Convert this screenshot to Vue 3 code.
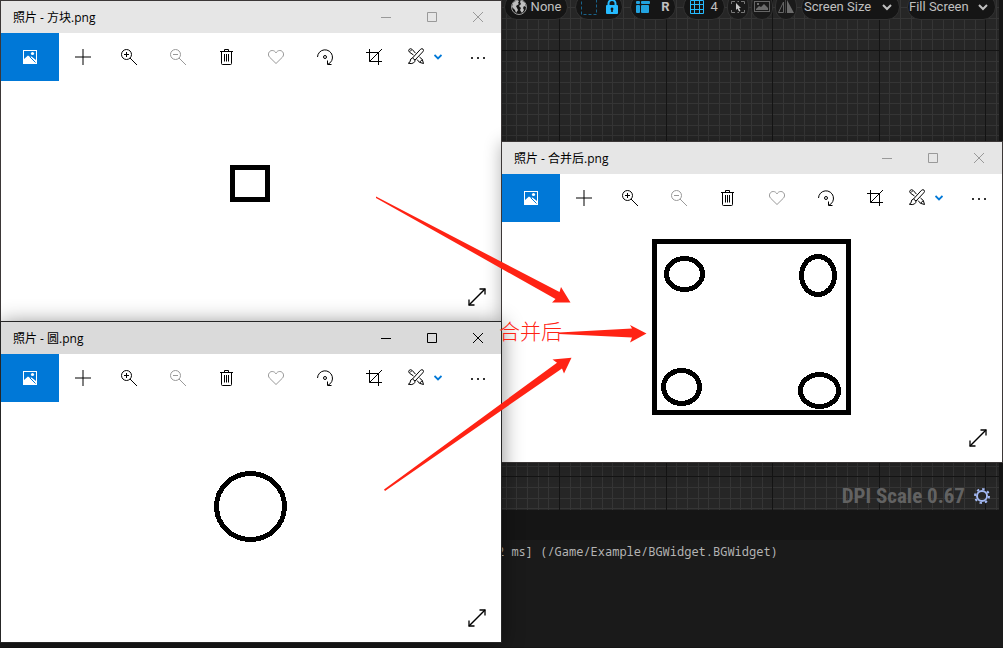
<script setup>
const majors = 106.6
const steps = 10.66

function gridPath(originX, originY, step, width, height) {
  const parts = []
  for (let k = -Math.floor(originX / step); originX + k * step < width; k++) {
    parts.push(`M${Math.round(originX + k * step)}.5 0V${height}`)
  }
  for (let k = -Math.floor(originY / step); originY + k * step < height; k++) {
    parts.push(`M0 ${Math.round(originY + k * step)}.5H${width}`)
  }
  return parts.join('')
}

const minorGrid = gridPath(559, 50, steps, 3000, 510)
const majorGrid = gridPath(559, 50, majors, 3000, 510)

const windows = [
  {
    id: 'square',
    title: '照片 - 方块.png',
    active: false,
    rects: [{ x: 231.5, y: 86.5, width: 35, height: 32 }],
    ellipses: [],
  },
  {
    id: 'merged',
    title: '照片 - 合并后.png',
    active: false,
    rects: [{ x: 152.5, y: 19.5, width: 194, height: 171 }],
    ellipses: [
      { cx: 182.5, cy: 52, rx: 18, ry: 15.5 },
      { cx: 316, cy: 53.5, rx: 16.5, ry: 19 },
      { cx: 179.5, cy: 165, rx: 18, ry: 16.5 },
      { cx: 317.5, cy: 168.5, rx: 19, ry: 16 },
    ],
  },
  {
    id: 'circle',
    title: '照片 - 圆.png',
    active: true,
    rects: [],
    ellipses: [{ cx: 249.5, cy: 104.5, rx: 34, ry: 33 }],
  },
]
</script>

<template>
  <main class="desktop">
    <section class="viewport">
      <svg class="grid" aria-hidden="true">
        <path :d="minorGrid" stroke="#353535" fill="none" />
        <path :d="majorGrid" stroke="#141414" fill="none" />
      </svg>
      <div class="editor-bar">
        <button class="pill none" type="button">
          <svg width="16" height="16" viewBox="0 0 16 16">
            <circle cx="8" cy="8" r="7.5" fill="none" stroke="#9a9a9a" />
            <path d="M2 4L6 1L8 2L7 4L8 5L5 7L6 9L7 11L5 14L4 11L1 8ZM10 1L14 4L15 8L13 7L12 9L13 11L11 14L9 11L10 9L8 7L10 5L9 3Z" fill="#c0c0c0" />
          </svg>
          <span>None</span>
        </button>
        <div class="pill lockers">
          <button type="button" aria-label="Outline">
            <svg width="16" height="16" viewBox="0 0 16 16">
              <rect x="0.5" y="0.5" width="15" height="15" fill="none" stroke="#1a6289" stroke-dasharray="3 2" />
            </svg>
          </button>
          <button type="button" aria-label="Lock">
            <svg width="12" height="16" viewBox="0 0 12 16">
              <path d="M2.5 7V4.5a3.5 3.5 0 0 1 7 0V7" fill="none" stroke="#26bbff" stroke-width="2" />
              <path d="M1 6H11Q12 6 12 7V14Q12 15 11 15H1Q0 15 0 14V7Q0 6 1 6ZM6 8.500a1.500 1.500 0 0 0-.8 2.700V13h1.600v-1.800A1.500 1.500 0 0 0 6 8.500Z" fill="#26bbff" fill-rule="evenodd" />
            </svg>
          </button>
        </div>
        <div class="pill layout">
          <button type="button" aria-label="Layout">
            <svg width="14" height="14" viewBox="0 0 14 14" fill="#22a3e0">
              <rect x="0" y="1" width="4" height="3" rx="1" />
              <rect x="0" y="5" width="4" height="8" rx="1" />
              <rect x="5" y="1" width="9" height="3" rx="1" />
              <rect x="5" y="5" width="8" height="8" rx="1" />
            </svg>
          </button>
          <button class="bold" type="button">R</button>
        </div>
        <div class="pill snap">
          <button type="button" aria-label="Grid snap">
            <svg width="14" height="14" viewBox="0 0 14 14">
              <path d="M.5 .5H13.500V13.500H.5ZM4.500 0V14M9.500 0V14M0 4.500H14M0 9.500H14" fill="none" stroke="#26bbff" />
            </svg>
          </button>
          <button type="button">4</button>
        </div>
        <button class="pill round" type="button" aria-label="Select">
          <svg width="14" height="14" viewBox="0 0 14 14">
            <path d="M.5 4V1.500H4M10 1.500H13.500V4M13.500 10V12.500H10M4 12.500H.5V10M6.500 1.500H8M6.500 12.500H8" fill="none" stroke="#777" />
            <path d="M5 3L10 8H8L9.500 11L8 11.500L6.500 8.500L5 10Z" fill="#c8c8c8" />
          </svg>
        </button>
        <button class="pill round" type="button" aria-label="Background image">
          <svg width="16" height="12" viewBox="0 0 16 12">
            <rect x="0.5" y="0.5" width="15" height="10" fill="none" stroke="#666" />
            <path d="M2 9V8L5 5L7 6L10 3L14 7V9Z" fill="#6c6c6c" />
            <rect x="3" y="2" width="2" height="2" fill="#6c6c6c" />
          </svg>
        </button>
        <button class="pill round" type="button" aria-label="Mirror">
          <svg width="16" height="14" viewBox="0 0 16 14">
            <path d="M5.500 2V12.500H.5Z" fill="none" stroke="#666" />
            <path d="M9 0V13H16Z" fill="#6c6c6c" />
            <path d="M7.500 0V13" stroke="#444" />
          </svg>
        </button>
        <button class="pill menu screen" type="button" aria-haspopup="menu">
          <span>Screen Size</span>
          <svg width="10" height="8" viewBox="0 0 10 8"><path d="M1 2L5 6L9 2" fill="none" stroke="#c0c0c0" stroke-width="2" /></svg>
        </button>
        <button class="pill menu fill" type="button" aria-haspopup="menu">
          <span>Fill Screen</span>
          <svg width="10" height="8" viewBox="0 0 10 8"><path d="M1 2L5 6L9 2" fill="none" stroke="#c0c0c0" stroke-width="2" /></svg>
        </button>
      </div>
      <div class="dpi">
        <span>DPI Scale 0.67</span>
        <button type="button" aria-label="DPI settings">
          <svg width="16" height="16" viewBox="0 0 16 16" fill="none" stroke="#a3b8f2">
            <circle cx="8" cy="8" r="5" stroke-width="2" />
            <circle cx="8" cy="8" r="7" stroke-width="2" stroke-dasharray="2.4 3.1" />
          </svg>
        </button>
      </div>
    </section>
    <section class="log">
      <p>2 ms] (/Game/Example/BGWidget.BGWidget)</p>
    </section>

    <article v-for="w in windows" :key="w.id" class="window" :class="[w.id, { active: w.active }]">
      <header class="titlebar">
        <h2>{{ w.title }}</h2>
        <button type="button" aria-label="最小化">
          <svg width="10" height="10" viewBox="0 0 10 10"><path d="M0 5.500H10" /></svg>
        </button>
        <button type="button" aria-label="最大化">
          <svg width="10" height="10" viewBox="0 0 10 10"><path d="M.5 .5H9.500V9.500H.5Z" /></svg>
        </button>
        <button type="button" aria-label="关闭">
          <svg width="10" height="10" viewBox="0 0 10 10"><path d="M0 0L10 10M10 0L0 10" /></svg>
        </button>
      </header>
      <nav class="toolbar">
        <button class="photo" type="button" aria-label="照片">
          <svg width="14" height="14" viewBox="0 0 14 14">
            <path d="M0 0H14V14H0ZM1 1V9L5 5.500L7 7L8.500 6.500L13 10V1Z" fill="#fff" fill-rule="evenodd" />
            <circle cx="9.500" cy="3.500" r="1.600" fill="#fff" />
            <path d="M7 7L12.500 12.500" stroke="#0078d7" fill="none" />
          </svg>
        </button>
        <button class="add" type="button" aria-label="添加">
          <svg width="16" height="16" viewBox="0 0 16 16">
            <path d="M8 0V16M0 8H16" stroke="#808080" stroke-width="2" />
            <path d="M7 8H9" stroke="#404040" stroke-width="2" />
          </svg>
        </button>
        <button type="button" aria-label="放大">
          <svg width="17" height="16" viewBox="0 0 17 16"><circle cx="5.500" cy="5.500" r="5" /><path d="M9 9L16 16M3 5.500H8M5.500 3V8" /></svg>
        </button>
        <button class="muted" type="button" aria-label="缩小">
          <svg width="17" height="16" viewBox="0 0 17 16"><circle cx="5.500" cy="5.500" r="5" /><path d="M9 9L16 16M3 5.500H8" /></svg>
        </button>
        <button type="button" aria-label="删除">
          <svg width="17" height="16" viewBox="0 0 17 16"><path d="M1 2.500H14M5.500 2.500V.5H9.500V2.500M2.500 2.500V14.500Q2.500 15.500 3.500 15.500H11.500Q12.500 15.500 12.500 14.500V2.500M5.500 5V12.500M7.500 5V12.500M9.500 5V12.500" /></svg>
        </button>
        <button class="muted" type="button" aria-label="收藏">
          <svg width="17" height="16" viewBox="0 0 17 16"><path d="M8 14.500L1.600 8.200C-.9 5.500 1 1.500 4.200 1.500C6 1.500 7.200 2.500 8 3.900C8.800 2.500 10 1.500 11.800 1.500C15 1.500 16.900 5.500 14.400 8.200Z" /></svg>
        </button>
        <button type="button" aria-label="旋转">
          <svg width="17" height="16" viewBox="0 0 17 16"><circle cx="8" cy="8" r="1.500" /><path d="M.5 8A7.500 7.500 0 1 1 11 15.200M10.500 11.500V15.500H14.500" /></svg>
        </button>
        <button type="button" aria-label="裁剪">
          <svg width="17" height="16" viewBox="0 0 17 16"><path d="M3.500 0V12.500H16M0 3.500H12.500V16M3.500 12.500L16 0" /></svg>
        </button>
        <button class="edit" type="button" aria-label="编辑和创建">
          <svg width="16" height="18" viewBox="0 0 16 18">
            <path d="M5.500 7L1.500 4.200Q0 2.600 1.200 1.300Q2.600 0 4.300 1.500L7.500 5.200M2 3.500L3.500 2M9 11.500L11.500 14.300L15.500 15.500L14.300 11.500L11.500 9M11.500 14.300L14.300 11.500" />
            <path d="M4.500 10L12.400 1.400Q14 0 15.100 1.200Q16.200 2.500 14.700 3.900L7 12M4.500 10Q2.200 10.500 2.200 13Q2 14.800 .3 15.200Q3.500 16.200 5.500 14.900Q7.200 13.800 7 12Z" />
          </svg>
        </button>
        <button class="drop" type="button" aria-label="更多编辑">
          <svg width="8" height="6" viewBox="0 0 8 6"><path d="M.5 1L4 4.500L7.500 1" stroke="#0078d7" stroke-width="1.8" /></svg>
        </button>
        <button class="more" type="button" aria-label="查看更多">
          <svg width="14" height="4" viewBox="0 0 14 4"><path d="M0 3H2M6 3H8M12 3H14" stroke="#333" stroke-width="2" /></svg>
        </button>
      </nav>
      <div class="picture">
        <svg class="drawing" viewBox="0 0 500 240" role="img" :aria-label="w.title">
          <rect v-for="(r, i) in w.rects" :key="'r' + i" v-bind="r" />
          <ellipse v-for="(e, i) in w.ellipses" :key="'e' + i" v-bind="e" />
        </svg>
        <button class="expand" type="button" aria-label="全屏">
          <svg width="18" height="18" viewBox="0 0 18 18"><path d="M1 17L17 1" stroke-width="1.4" /><path d="M11.500 1H17V6.500M1 11.500V17H6.500" stroke-width="1.3" /></svg>
        </button>
      </div>
    </article>

    <svg class="arrows" width="1003" height="648" viewBox="0 0 1003 648" fill="#ff2314" aria-hidden="true">
      <path d="M376 196.500L559.500 292L561 287L570.500 302.500L552 302.500L555.500 299L376 198Z" />
      <path d="M559 332.500L632 328.500L630 325L646.500 333.500L630 342.500L632 337.500L559 334Z" />
      <path d="M384 489.500L557 362.700L552.500 359.500L571.500 357.800L564 373.500L562 368.500L385 491Z" />
    </svg>
    <p class="note">合并后</p>
  </main>
</template>

<style>
body {
  margin: 0;
  background: #151515;
}
</style>

<style scoped>
.desktop {
  position: relative;
  display: grid;
  grid-template-rows: 510px 1fr;
  row-gap: 30px;
  min-height: 100vh;
  overflow: hidden;
  background: #151515;
  font-family: "Open Sans", "Noto Sans CJK SC", sans-serif;
}

button {
  display: flex;
  align-items: center;
  justify-content: center;
  margin: 0;
  padding: 0;
  border: 0;
  background: none;
  color: inherit;
  font: inherit;
}

svg {
  display: block;
  flex: none;
}

p,
h2 {
  margin: 0;
}

.viewport {
  position: relative;
  display: flex;
  flex-direction: column;
  justify-content: space-between;
  margin-right: 4px;
  overflow: hidden;
  background: #262626;
}

.grid {
  position: absolute;
  inset: 0;
  width: 100%;
  height: 100%;
}

.editor-bar {
  position: relative;
  display: flex;
  justify-content: flex-end;
  gap: 7px;
  margin-top: -6px;
  padding-right: 3px;
  color: #c0c0c0;
  font: 13px/16px Roboto, sans-serif;
}

.pill {
  box-sizing: border-box;
  display: flex;
  align-items: center;
  height: 26px;
  border: 1px solid #323232;
  border-radius: 13px;
  background: #151515;
}

.none {
  width: 64px;
  gap: 4px;
}

.lockers {
  width: 48px;
  justify-content: space-around;
}

.layout {
  width: 46px;
  justify-content: space-around;
}

.snap {
  width: 42px;
  justify-content: space-evenly;
}

.bold {
  font-weight: 700;
}

.round {
  width: 22px;
  margin-left: -5px;
  background: #1a1a1a;
}

.menu {
  justify-content: space-between;
  padding: 0 7px 0 2px;
}

.screen {
  width: 99px;
  margin-left: -3px;
}

.fill {
  width: 89px;
  padding-left: 1px;
}

.dpi {
  position: relative;
  display: flex;
  align-items: center;
  justify-content: flex-end;
  gap: 9px;
  padding: 0 9px 2px 0;
  color: #626262;
  font: 700 21px/24px "Roboto Condensed", Roboto, sans-serif;
}

.log {
  padding: 4px 0 0 497px;
  margin-bottom: 1px;
  background: #1a1a1a;
  color: #b4b4b4;
  font: 12px/16px "Noto Sans Mono", "DejaVu Sans Mono", monospace;
}

.window {
  position: absolute;
  width: 500px;
  border: 1px solid #3b3737;
  background: #fff;
  box-shadow: 0 2px 16px rgba(0, 0, 0, 0.3);
}

.square {
  left: 0;
  top: 0;
}

.merged {
  left: 501px;
  top: 141px;
}

.circle {
  left: 0;
  top: 321px;
}

.window.active {
  border-color: #262626;
  box-shadow: 0 2px 20px rgba(0, 0, 0, 0.45);
}

.titlebar {
  display: flex;
  height: 32px;
  background: #e6e6e6;
  color: #999;
}

.titlebar h2 {
  flex: 1;
  padding-left: 12px;
  color: #000;
  font-size: 12px;
  font-weight: 400;
  line-height: 34px;
}

.titlebar button {
  width: 46px;
}

.active .titlebar {
  background: #dadada;
  color: #000;
}

.titlebar svg,
.toolbar svg,
.expand svg {
  fill: none;
  stroke: currentColor;
}

.toolbar {
  display: flex;
  height: 48px;
  color: #000;
}

.toolbar button {
  width: 49px;
}

.toolbar .photo {
  width: 58px;
  margin-right: 2px;
  background: #0078d7;
}

.toolbar .photo svg {
  stroke: none;
}

.toolbar .add {
  width: 44px;
}

.toolbar .muted {
  color: #999;
}

.toolbar .edit {
  width: 34px;
}

.toolbar .drop {
  width: 10px;
}

.toolbar .more {
  width: 46px;
  margin-left: auto;
}

.picture {
  position: relative;
}

.drawing {
  width: 100%;
  height: 240px;
  fill: none;
  stroke: #000;
  stroke-width: 5;
  shape-rendering: crispEdges;
}

.expand {
  position: absolute;
  right: 15px;
  bottom: 15px;
}

.arrows {
  position: absolute;
  left: 0;
  top: 0;
}

.note {
  position: absolute;
  left: 499px;
  top: 318px;
  color: #ff2314;
  font: 300 21px/24px "Noto Sans CJK SC", sans-serif;
}
</style>
